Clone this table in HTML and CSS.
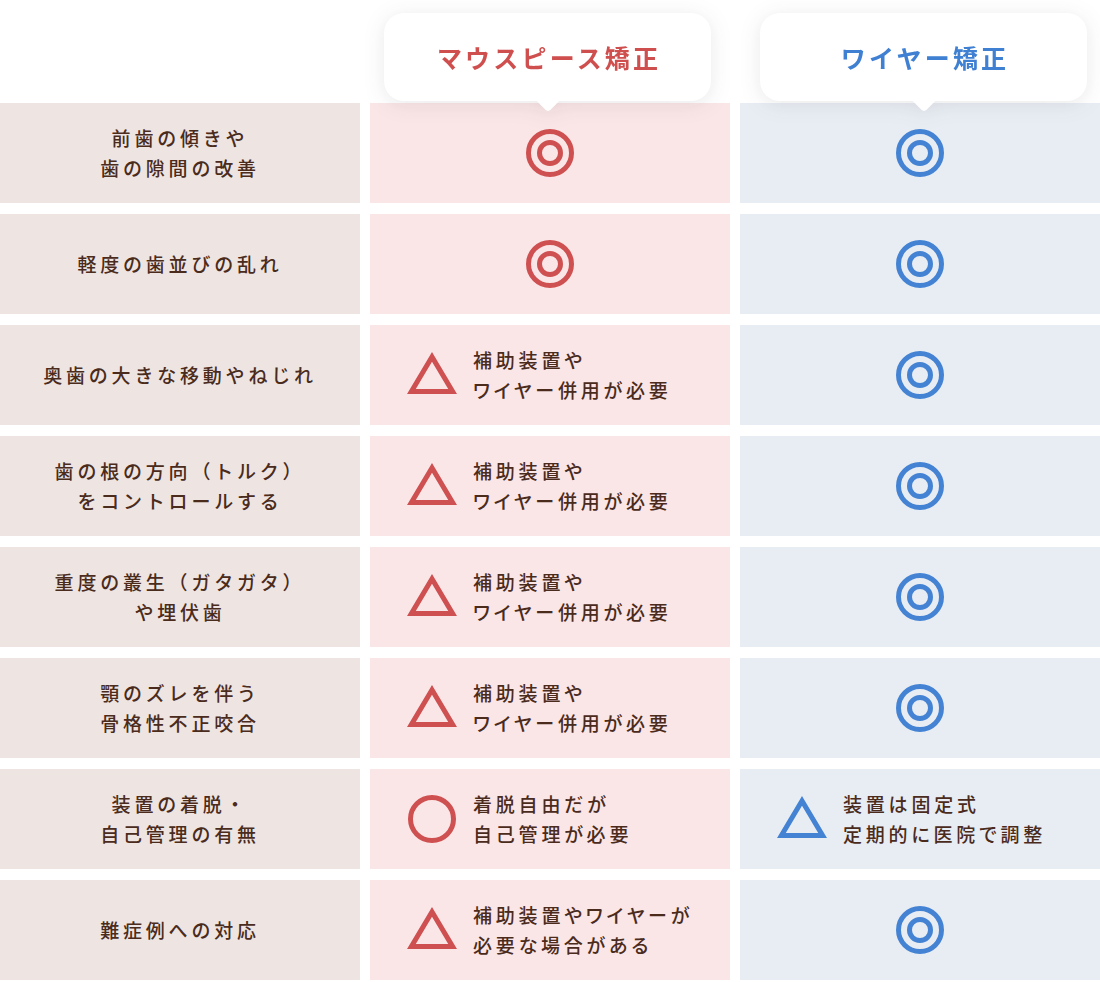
FILE: index.html
```html
<!DOCTYPE html>
<html lang="ja">
<head>
<meta charset="utf-8">
<title>マウスピース矯正とワイヤー矯正の比較</title>
<link rel="stylesheet" href="styles.css">
</head>
<body>
<div class="compare">
  <div class="head">
    <div class="head-spacer"></div>
    <div class="head-col head-mp"><div class="bubble bubble-mp"><span class="bubble-text">マウスピース矯正</span></div></div>
    <div class="head-col head-wr"><div class="bubble bubble-wr"><span class="bubble-text">ワイヤー矯正</span></div></div>
  </div>
  <div class="table">
    <div class="cell label">前歯の傾きや<br>歯の隙間の改善</div>
    <div class="cell mp center"><svg class="ico" viewBox="0 0 48 48"><circle cx="24" cy="24" r="21.5"/><circle cx="24" cy="24" r="10.5"/></svg></div>
    <div class="cell wr center"><svg class="ico" viewBox="0 0 48 48"><circle cx="24" cy="24" r="21.5"/><circle cx="24" cy="24" r="10.5"/></svg></div>

    <div class="cell label">軽度の歯並びの乱れ</div>
    <div class="cell mp center"><svg class="ico" viewBox="0 0 48 48"><circle cx="24" cy="24" r="21.5"/><circle cx="24" cy="24" r="10.5"/></svg></div>
    <div class="cell wr center"><svg class="ico" viewBox="0 0 48 48"><circle cx="24" cy="24" r="21.5"/><circle cx="24" cy="24" r="10.5"/></svg></div>

    <div class="cell label">奥歯の大きな移動やねじれ</div>
    <div class="cell mp note"><svg class="tri" viewBox="0 0 50 42"><path d="M25 0 L50 42 L0 42 Z M25 9.77 L8.79 37 L41.21 37 Z"/></svg><p class="note-text">補助装置や<br>ワイヤー併用が必要</p></div>
    <div class="cell wr center"><svg class="ico" viewBox="0 0 48 48"><circle cx="24" cy="24" r="21.5"/><circle cx="24" cy="24" r="10.5"/></svg></div>

    <div class="cell label">歯の根の方向（トルク）<br>をコントロールする</div>
    <div class="cell mp note"><svg class="tri" viewBox="0 0 50 42"><path d="M25 0 L50 42 L0 42 Z M25 9.77 L8.79 37 L41.21 37 Z"/></svg><p class="note-text">補助装置や<br>ワイヤー併用が必要</p></div>
    <div class="cell wr center"><svg class="ico" viewBox="0 0 48 48"><circle cx="24" cy="24" r="21.5"/><circle cx="24" cy="24" r="10.5"/></svg></div>

    <div class="cell label">重度の叢生（ガタガタ）<br>や埋伏歯</div>
    <div class="cell mp note"><svg class="tri" viewBox="0 0 50 42"><path d="M25 0 L50 42 L0 42 Z M25 9.77 L8.79 37 L41.21 37 Z"/></svg><p class="note-text">補助装置や<br>ワイヤー併用が必要</p></div>
    <div class="cell wr center"><svg class="ico" viewBox="0 0 48 48"><circle cx="24" cy="24" r="21.5"/><circle cx="24" cy="24" r="10.5"/></svg></div>

    <div class="cell label">顎のズレを伴う<br>骨格性不正咬合</div>
    <div class="cell mp note"><svg class="tri" viewBox="0 0 50 42"><path d="M25 0 L50 42 L0 42 Z M25 9.77 L8.79 37 L41.21 37 Z"/></svg><p class="note-text">補助装置や<br>ワイヤー併用が必要</p></div>
    <div class="cell wr center"><svg class="ico" viewBox="0 0 48 48"><circle cx="24" cy="24" r="21.5"/><circle cx="24" cy="24" r="10.5"/></svg></div>

    <div class="cell label">装置の着脱・<br>自己管理の有無</div>
    <div class="cell mp note"><svg class="ico ring" viewBox="0 0 48 48"><circle cx="24" cy="24" r="21.5"/></svg><p class="note-text">着脱自由だが<br>自己管理が必要</p></div>
    <div class="cell wr note"><svg class="tri" viewBox="0 0 50 42"><path d="M25 0 L50 42 L0 42 Z M25 9.77 L8.79 37 L41.21 37 Z"/></svg><p class="note-text">装置は固定式<br>定期的に医院で調整</p></div>

    <div class="cell label">難症例への対応</div>
    <div class="cell mp note"><svg class="tri" viewBox="0 0 50 42"><path d="M25 0 L50 42 L0 42 Z M25 9.77 L8.79 37 L41.21 37 Z"/></svg><p class="note-text">補助装置やワイヤーが<br>必要な場合がある</p></div>
    <div class="cell wr center"><svg class="ico" viewBox="0 0 48 48"><circle cx="24" cy="24" r="21.5"/><circle cx="24" cy="24" r="10.5"/></svg></div>
  </div>
</div>
</body>
</html>
```
FILE: styles.css
```css
html, body {
  margin: 0;
  padding: 0;
  background: #ffffff;
}
body {
  font-family: "Noto Sans CJK JP", "Noto Sans", sans-serif;
  color: #4a2b1c;
}
.compare {
  width: 1100px;
}
.head {
  display: grid;
  grid-template-columns: 360px 360px 360px;
  column-gap: 10px;
  padding-top: 13px;
  margin-bottom: 2px;
  position: relative;
  z-index: 2;
}
.head-col {
  height: 88px;
}
.bubble {
  position: relative;
  width: 327px;
  height: 88px;
  background: #ffffff;
  border-radius: 20px;
  display: flex;
  align-items: center;
  justify-content: center;
  filter: drop-shadow(0 3px 10px rgba(60, 40, 40, 0.10));
}
.bubble::after {
  content: "";
  position: absolute;
  left: 50%;
  bottom: -8px;
  width: 16px;
  height: 16px;
  margin-left: -8px;
  background: #ffffff;
  border-bottom-right-radius: 4px;
  transform: rotate(45deg);
}
.bubble-mp {
  margin-left: 14px;
  color: #cf4f4f;
}
.bubble-wr {
  margin-left: 20px;
  color: #3f80d2;
}
.bubble-text {
  font-size: 25px;
  font-weight: 700;
  letter-spacing: 3.2px;
  margin-right: -3.2px;
  line-height: 1;
}
.table {
  display: grid;
  grid-template-columns: 360px 360px 360px;
  column-gap: 10px;
  row-gap: 11px;
  grid-auto-rows: 100px;
}
.cell {
  display: flex;
  align-items: center;
  font-size: 19px;
  font-weight: 500;
  line-height: 30px;
  letter-spacing: 0.2em;
}
.label {
  background: #eee5e2;
  justify-content: center;
  text-align: center;
}
.mp {
  background: #fae6e7;
  color: #4a2b1c;
}
.wr {
  background: #e8edf4;
}
.mp .ico, .mp .tri {
  color: #cf5050;
}
.wr .ico, .wr .tri {
  color: #4483d3;
}
.center {
  justify-content: center;
}
.note {
  padding-left: 37px;
  gap: 16px;
}
.ico {
  width: 48px;
  height: 48px;
  flex: none;
}
.ico circle {
  fill: none;
  stroke: currentColor;
  stroke-width: 5;
}
.ring {
  margin-left: 1px;
  margin-right: 1px;
}
.tri {
  width: 50px;
  height: 42px;
  flex: none;
  margin-bottom: 4px;
}
.tri path {
  fill: currentColor;
  fill-rule: evenodd;
}
.note-text {
  margin: 0;
  font-feature-settings: "palt";
}
```
